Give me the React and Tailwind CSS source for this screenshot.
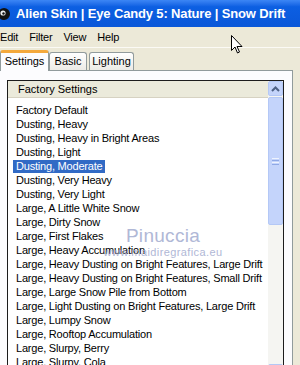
import React from 'react';

const presets = [
  'Factory Default',
  'Dusting, Heavy',
  'Dusting, Heavy in Bright Areas',
  'Dusting, Light',
  'Dusting, Moderate',
  'Dusting, Very Heavy',
  'Dusting, Very Light',
  'Large, A Little White Snow',
  'Large, Dirty Snow',
  'Large, First Flakes',
  'Large, Heavy Accumulation',
  'Large, Heavy Dusting on Bright Features, Large Drift',
  'Large, Heavy Dusting on Bright Features, Small Drift',
  'Large, Large Snow Pile from Bottom',
  'Large, Light Dusting on Bright Features, Large Drift',
  'Large, Lumpy Snow',
  'Large, Rooftop Accumulation',
  'Large, Slurpy, Berry',
  'Large, Slurpy, Cola',
];

function ArrowButton({ up }) {
  return (
    <div className="h-[15px] w-[15px] rounded-[2px] border border-[#b4c8f6] bg-[#c4d4fb] flex items-center justify-center">
      <svg width="9" height="6" viewBox="0 0 9 6">
        <path
          d={up ? 'M1 5 L4.5 1.5 L8 5' : 'M1 1 L4.5 4.5 L8 1'}
          fill="none"
          stroke="#4d6185"
          strokeWidth="2"
        />
      </svg>
    </div>
  );
}

function Scrollbar() {
  return (
    <div className="w-[15px] flex flex-col bg-[#f5f5f2]">
      <ArrowButton up />
      <div className="flex-1 pt-[1px]">
        <div className="h-[128px] rounded-[2px] border border-[#b4c8f6] bg-[#c4d4fb] flex items-center justify-center">
          <div className="flex flex-col gap-[1px]">
            <div className="h-px w-[7px] bg-[#eef3fe]" />
            <div className="h-px w-[7px] bg-[#8fa9e6]" />
            <div className="h-px w-[7px] bg-[#eef3fe]" />
            <div className="h-px w-[7px] bg-[#8fa9e6]" />
          </div>
        </div>
      </div>
      <ArrowButton />
    </div>
  );
}

export default function App() {
  return (
    <div className="relative w-[300px] h-[365px] overflow-hidden bg-[#ece9d8] flex flex-col font-['Liberation_Sans',Arial,sans-serif] text-[11px] text-black">
      {/* title bar */}
      <div className="h-[27px] shrink-0 flex items-center bg-gradient-to-b from-[#3c86f5] via-[#0c5fe2] via-25% to-[#0a57d8] text-white">
        <svg width="14" height="14" viewBox="0 0 14 14" className="-ml-[3px] mr-[5px]">
          <circle cx="7" cy="7" r="6" fill="#111" />
          <circle cx="6" cy="6" r="2.6" fill="#eee" />
          <circle cx="6.5" cy="6.5" r="1.2" fill="#111" />
        </svg>
        <span className="font-bold text-[13px] whitespace-nowrap tracking-[-0.15px]">
          Alien Skin | Eye Candy 5: Nature | Snow Drift
        </span>
      </div>

      {/* menu bar */}
      <div className="h-[20px] shrink-0 flex items-center gap-[11px] tracking-[-0.2px]">
        <span>Edit</span>
        <span>Filter</span>
        <span>View</span>
        <span>Help</span>
      </div>
      <div className="h-px shrink-0 bg-[#fbfaf5]" />

      {/* tabs */}
      <div className="h-[22px] shrink-0 flex items-end pt-[2px] relative z-10">
        <div className="h-[21px] w-[49px] -mb-px bg-[#fcfcfe] border-x border-[#919b9c] border-t-[3px] border-t-[#f4a93c] rounded-t-[3px] flex items-center justify-center pb-[2px]">
          Settings
        </div>
        <div className="h-[18px] w-[38px] border border-b-0 border-[#919b9c] bg-gradient-to-b from-white to-[#ecebe6] rounded-t-[3px] flex items-center justify-center">
          Basic
        </div>
        <div className="h-[18px] w-[45px] ml-[2px] border border-b-0 border-[#919b9c] bg-gradient-to-b from-white to-[#ecebe6] rounded-t-[3px] flex items-center justify-center">
          Lighting
        </div>
      </div>

      {/* tab panel */}
      <div className="flex-1 w-[293px] bg-[#fcfcfe] border-t border-r border-[#919b9c] pl-[7px] pt-[9px]">
        <div className="w-[277px] h-[300px] border border-[#1c1c1c] flex bg-white">
          <div className="flex-1 flex flex-col">
            <div className="h-[17px] bg-[#ebeadb] border-b border-[#d6d2c2] pl-[10px] flex items-center">
              Factory Settings
            </div>
            <div className="pt-[5px] pl-[8px] tracking-[-0.2px]">
              {presets.map((p, i) => (
                <div key={p} className="h-[14px] flex items-center whitespace-nowrap">
                  <span
                    className={
                      i === 4
                        ? 'bg-[#316ac5] text-white px-[3px] -ml-[3px] h-[13px] leading-[13px]'
                        : ''
                    }
                  >
                    {p}
                  </span>
                </div>
              ))}
            </div>
          </div>
          <Scrollbar />
        </div>
      </div>

      {/* watermark */}
      <div className="absolute left-[103px] top-[226px] w-[120px] flex flex-col items-center text-[#a3acd0] opacity-85 pointer-events-none">
        <span className="text-[19px] leading-[20px] tracking-[0.3px]">Pinuccia</span>
        <span className="text-[11px] leading-[11px] mt-[1px] tracking-[0.4px]">www.maidiregrafica.eu</span>
      </div>

      {/* mouse cursor */}
      <svg width="13" height="20" viewBox="0 0 13 20" className="absolute left-[231px] top-[35px]">
        <path
          d="M0.5 0.5 L0.5 15.5 L4 12 L6.5 18 L8.5 17 L6 11.5 L11 11.5 Z"
          fill="white"
          stroke="black"
          strokeWidth="1"
        />
      </svg>
    </div>
  );
}
